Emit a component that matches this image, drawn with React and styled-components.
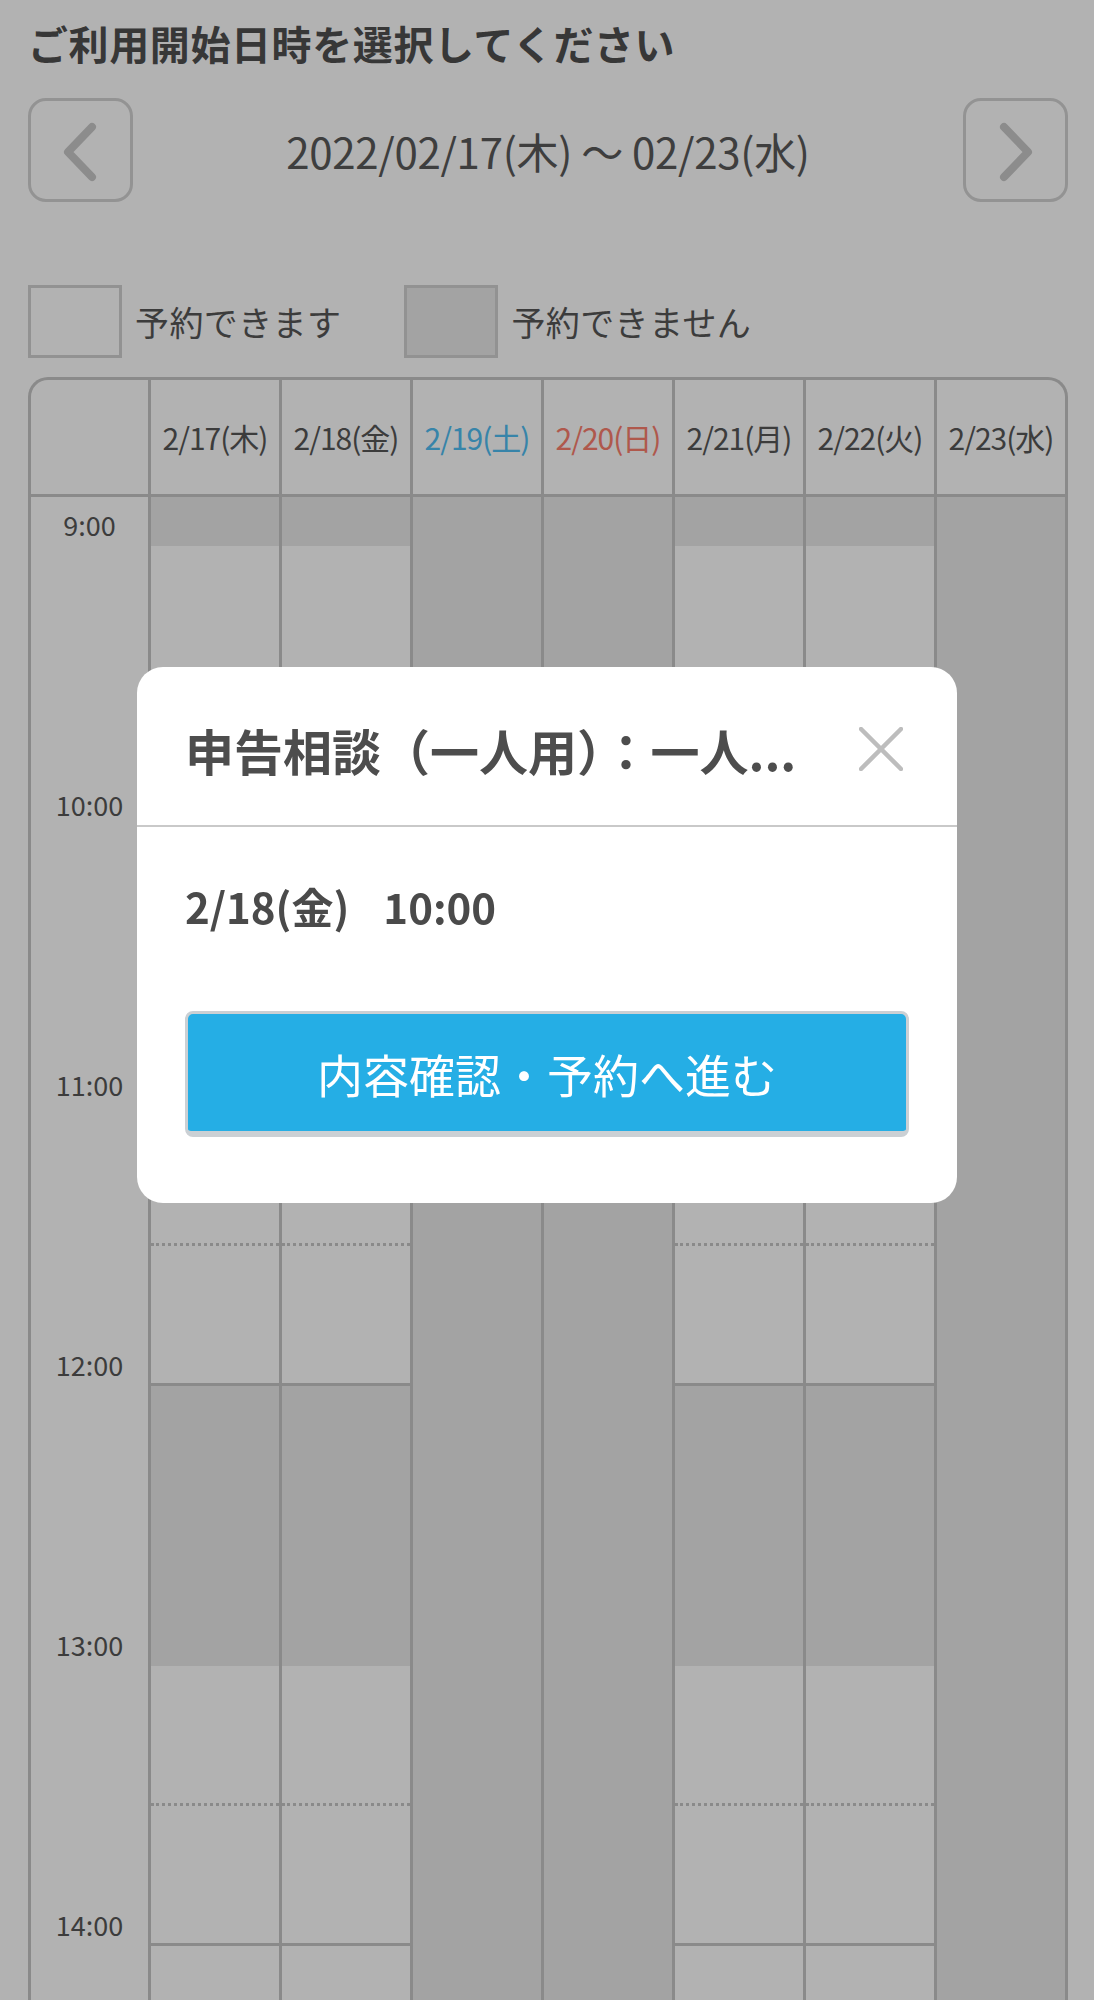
import styled, { createGlobalStyle } from 'styled-components';

const GlobalStyle = createGlobalStyle`
  html, body {
    margin: 0;
    padding: 0;
    background: #fff;
  }
  body {
    font-family: "Noto Sans CJK JP", "Noto Sans", sans-serif;
    color: #4d4d4d;
  }
  * { box-sizing: border-box; }
`;

const days = [
  { label: '2/17(木)', open: true },
  { label: '2/18(金)', open: true },
  { label: '2/19(土)', open: false, tone: 'sat' },
  { label: '2/20(日)', open: false, tone: 'sun' },
  { label: '2/21(月)', open: true },
  { label: '2/22(火)', open: true },
  { label: '2/23(水)', open: false },
];

const hours = ['9:00', '10:00', '11:00', '12:00', '13:00', '14:00'];

// slots for a day that takes bookings: a closed lead-in, mornings, lunch, afternoon
const openSlots = [
  { closed: true, h: 49 },
  ...[0, 1, 2, 3, 4, 5].map((i) => ({ h: 140, line: i % 2 ? 'solid' : 'dotted' })),
  { closed: true, h: 280 },
  ...[0, 1, 2, 3].map((i) => ({ h: 140, line: i % 2 ? 'solid' : 'dotted' })),
];

function Chevron({ dir }) {
  const pts = dir === 'left' ? '64,29 40,54 64,79' : '41,29 65,54 41,79';
  return (
    <svg width="105" height="104" viewBox="0 0 105 104">
      <polyline points={pts} fill="none" stroke="#c9c9c9" strokeWidth="8" strokeLinecap="round" strokeLinejoin="round" />
    </svg>
  );
}

function CloseIcon() {
  return (
    <svg width="44" height="44" viewBox="0 0 44 44">
      <path d="M2 2 L42 42 M42 2 L2 42" stroke="#bdbdbd" strokeWidth="4.5" strokeLinecap="round" />
    </svg>
  );
}

export default function App() {
  return (
    <>
      <GlobalStyle />
      <Screen>
        <Page>
          <Title>ご利用開始日時を選択してください</Title>

          <WeekNav>
            <NavButton aria-label="前の週"><Chevron dir="left" /></NavButton>
            <Range>2022/02/17(木) 〜 02/23(水)</Range>
            <NavButton aria-label="次の週"><Chevron dir="right" /></NavButton>
          </WeekNav>

          <Legend>
            <LegendItem>
              <Swatch />
              予約できます
            </LegendItem>
            <LegendItem>
              <Swatch $closed />
              予約できません
            </LegendItem>
          </Legend>

          <Calendar>
            <HeadRow>
              <HeadCell />
              {days.map((d) => (
                <HeadCell key={d.label} $tone={d.tone} $divider>{d.label}</HeadCell>
              ))}
            </HeadRow>
            <BodyRow>
              <TimeColumn>
                {hours.map((h) => (
                  <TimeCell key={h}>{h}</TimeCell>
                ))}
              </TimeColumn>
              {days.map((d) => (
                <DayColumn key={d.label} $closed={!d.open}>
                  {d.open &&
                    openSlots.map((s, i) => (
                      <Slot key={i} $closed={s.closed} $line={s.line} style={{ height: s.h }} />
                    ))}
                </DayColumn>
              ))}
            </BodyRow>
          </Calendar>
        </Page>

        <Overlay>
          <Modal>
            <ModalHead>
              <ModalTitle>申告相談（一人用）：一人...</ModalTitle>
              <CloseButton aria-label="閉じる"><CloseIcon /></CloseButton>
            </ModalHead>
            <ModalBody>
              <Picked>
                <span>2/18(金)</span>
                <span>10:00</span>
              </Picked>
              <PrimaryButton>内容確認・予約へ進む</PrimaryButton>
            </ModalBody>
          </Modal>
        </Overlay>
      </Screen>
    </>
  );
}

const Screen = styled.div`
  position: relative;
  height: 100vh;
  overflow: hidden;
`;

const Page = styled.div`
  padding: 14px 26px 0 28px;
`;

const Title = styled.h1`
  margin: 0;
  font-size: 40px;
  line-height: 58px;
  font-weight: 700;
  color: #4f4f4f;
  letter-spacing: 0.6px;
`;

const WeekNav = styled.div`
  margin-top: 26px;
  display: flex;
  align-items: center;
  justify-content: space-between;
`;

const NavButton = styled.button`
  width: 105px;
  height: 104px;
  padding: 0;
  border: 3px solid #d3d3d3;
  border-radius: 18px;
  background: #fff;
  display: flex;
  align-items: center;
  justify-content: center;
  svg { display: block; flex: none; }
`;

const Range = styled.div`
  font-size: 42px;
  color: #595959;
  letter-spacing: -0.3px;
`;

const Legend = styled.div`
  margin-top: 83px;
  display: flex;
  align-items: center;
  gap: 63px;
`;

const LegendItem = styled.div`
  display: flex;
  align-items: center;
  gap: 13px;
  font-size: 34px;
  color: #575757;
  letter-spacing: 0.4px;
`;

const Swatch = styled.span`
  width: 94px;
  height: 73px;
  border: 3px solid #d2d2d2;
  background: ${(p) => (p.$closed ? '#eaeaea' : '#fff')};
`;

const Calendar = styled.div`
  margin-top: 19px;
  border: 3px solid #c6c6c6;
  border-bottom: none;
  border-radius: 20px 20px 0 0;
  overflow: hidden;
`;

const columns = `
  display: grid;
  grid-template-columns: 117px repeat(7, 1fr);
`;

const HeadRow = styled.div`
  ${columns}
  height: 117px;
  border-bottom: 3px solid #c6c6c6;
`;

const toneColor = { sat: '#50bdf2', sun: '#fb7e6d' };

const HeadCell = styled.div`
  display: flex;
  align-items: center;
  justify-content: center;
  font-size: 30px;
  letter-spacing: -1px;
  white-space: nowrap;
  color: ${(p) => toneColor[p.$tone] || '#575757'};
  border-left: ${(p) => (p.$divider ? '3px solid #c6c6c6' : 'none')};
`;

const BodyRow = styled.div`
  ${columns}
  height: 1600px;
`;

const TimeColumn = styled.div`
  display: flex;
  flex-direction: column;
`;

const TimeCell = styled.div`
  height: 280px;
  flex: none;
  padding-top: 10px;
  text-align: center;
  font-size: 27px;
  line-height: 36px;
  color: #575757;
`;

const DayColumn = styled.div`
  display: flex;
  flex-direction: column;
  border-left: 3px solid #c6c6c6;
  background: ${(p) => (p.$closed ? '#eaeaea' : '#fff')};
`;

const Slot = styled.div`
  flex: none;
  background: ${(p) => (p.$closed ? '#eaeaea' : '#fff')};
  border-bottom: ${(p) => (p.$line ? `3px ${p.$line} #c6c6c6` : 'none')};
`;

const Overlay = styled.div`
  position: fixed;
  inset: 0;
  background: rgba(0, 0, 0, 0.3);
  display: flex;
  justify-content: center;
  align-items: flex-start;
  padding-top: 667px;
`;

const Modal = styled.div`
  width: 820px;
  background: #fff;
  border-radius: 26px;
  overflow: hidden;
`;

const ModalHead = styled.div`
  height: 160px;
  display: flex;
  align-items: center;
  gap: 40px;
  padding: 6px 54px 0 48px;
  border-bottom: 2px solid #c9c9c9;
`;

const ModalTitle = styled.h2`
  flex: 1;
  min-width: 0;
  margin: 0;
  font-size: 49px;
  font-weight: 700;
  color: #4d4d4d;
  white-space: nowrap;
`;

const CloseButton = styled.button`
  flex: none;
  width: 44px;
  height: 44px;
  padding: 0;
  border: none;
  background: none;
  svg { display: block; }
`;

const ModalBody = styled.div`
  padding: 51px 48px 66px 48px;
`;

const Picked = styled.div`
  display: flex;
  gap: 34px;
  font-size: 42px;
  line-height: 56px;
  font-weight: 700;
  color: #4a4a4a;
`;

const PrimaryButton = styled.button`
  margin-top: 77px;
  width: 100%;
  height: 126px;
  border: 3px solid #cbd0d4;
  border-bottom-width: 6px;
  border-radius: 8px;
  background: #25aee5;
  color: #fff;
  font-family: inherit;
  font-size: 46px;
  font-weight: 400;
`;
